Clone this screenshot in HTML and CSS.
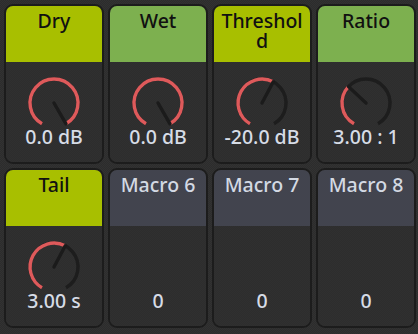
FILE: index.html
```html
<!DOCTYPE html>
<html lang="en">
    <head>
        <meta charset="UTF-8" />
        <meta name="viewport" content="width=device-width, initial-scale=1.0" />
        <title>macros</title>
        <link rel="stylesheet" href="styles.css">
    </head>
    <body>
        <!--매크로 그리드-->
        <main class="rack">
            <!-- 1. Dry -->
            <div class="macro">
                <div class="mhead lime">Dry</div>
                <div class="mbody">
                    <svg class="knob" viewBox="0 0 56 52">
                        <path class="track" d="M16 48.78 A24 24 0 1 1 40 48.78" />
                        <path class="val" d="M16 48.78 A24 24 0 1 1 40 48.78" />
                        <line class="needle" x1="28" y1="28" x2="40" y2="48.78" />
                    </svg>
                    <div class="mval">0.0 dB</div>
                </div>
            </div>
            <!-- 2. Wet -->
            <div class="macro">
                <div class="mhead green">Wet</div>
                <div class="mbody">
                    <svg class="knob" viewBox="0 0 56 52">
                        <path class="track" d="M16 48.78 A24 24 0 1 1 40 48.78" />
                        <path class="val" d="M16 48.78 A24 24 0 1 1 40 48.78" />
                        <line class="needle" x1="28" y1="28" x2="40" y2="48.78" />
                    </svg>
                    <div class="mval">0.0 dB</div>
                </div>
            </div>
            <!-- 3. Threshold -->
            <div class="macro">
                <div class="mhead lime">Threshold</div>
                <div class="mbody">
                    <svg class="knob" viewBox="0 0 56 52">
                        <path class="track" d="M16 48.78 A24 24 0 1 1 40 48.78" />
                        <path class="val" d="M16 48.78 A24 24 0 0 1 39.27 6.81" />
                        <line class="needle" x1="28" y1="28" x2="39.27" y2="6.81" />
                    </svg>
                    <div class="mval">-20.0 dB</div>
                </div>
            </div>
            <!-- 4. Ratio -->
            <div class="macro">
                <div class="mhead green">Ratio</div>
                <div class="mbody">
                    <svg class="knob" viewBox="0 0 56 52">
                        <path class="track" d="M16 48.78 A24 24 0 1 1 40 48.78" />
                        <path class="val" d="M16 48.78 A24 24 0 0 1 10.45 11.63" />
                        <line class="needle" x1="28" y1="28" x2="10.45" y2="11.63" />
                    </svg>
                    <div class="mval">3.00 : 1</div>
                </div>
            </div>
            <!-- 5. Tail -->
            <div class="macro">
                <div class="mhead lime">Tail</div>
                <div class="mbody">
                    <svg class="knob" viewBox="0 0 56 52">
                        <path class="track" d="M16 48.78 A24 24 0 1 1 40 48.78" />
                        <path class="val" d="M16 48.78 A24 24 0 0 1 39.27 6.81" />
                        <line class="needle" x1="28" y1="28" x2="39.27" y2="6.81" />
                    </svg>
                    <div class="mval">3.00 s</div>
                </div>
            </div>
            <!-- 6~8. 빈 매크로 -->
            <div class="macro">
                <div class="mhead grey">Macro 6</div>
                <div class="mbody">
                    <div class="knob"></div>
                    <div class="mval">0</div>
                </div>
            </div>
            <div class="macro">
                <div class="mhead grey">Macro 7</div>
                <div class="mbody">
                    <div class="knob"></div>
                    <div class="mval">0</div>
                </div>
            </div>
            <div class="macro">
                <div class="mhead grey">Macro 8</div>
                <div class="mbody">
                    <div class="knob"></div>
                    <div class="mval">0</div>
                </div>
            </div>
        </main>
    </body>
</html>
```

FILE: styles.css
```css
html,
body {
    margin: 0px;
    padding: 0px;
    width: 100%;
    height: 100%;
}

body {
    /* 바탕 체크무늬 */
    background: repeating-conic-gradient(#2c2c2c 0 25%, #323232 0 50%) 0 0 / 2px 2px;
    font-family: "Noto Sans", "DejaVu Sans", sans-serif;
}

/* 4칸 그리드 */
.rack {
    display: grid;
    grid-template-columns: repeat(4, 100px);
    grid-auto-rows: 160px;
    gap: 4px;
    padding: 4px 0 0 4px;
}

.macro {
    display: flex;
    flex-direction: column;
    border: 2px solid #1c1c1c;
    border-radius: 9px;
    overflow: hidden;
    box-sizing: border-box;
}

/* 제목칸 */
.mhead {
    height: 56px;
    flex-shrink: 0;
    padding: 5px 6px 0;
    box-sizing: border-box;
    font-size: 19.5px;
    font-weight: 500;
    line-height: 20px;
    text-align: center;
    word-break: break-all;
    color: #111;
}

.lime {
    background: #a8bf00;
}

.green {
    background: #7db04f;
}

.grey {
    background: #42444e;
    color: #d3d9e3;
}

/* 노브칸 */
.mbody {
    flex: 1;
    display: flex;
    flex-direction: column;
    align-items: center;
    justify-content: flex-end;
    padding-bottom: 15.5px;
    background: repeating-conic-gradient(#2d2d2d 0 25%, #303030 0 50%) 0 0 / 2px 2px;
}

.knob {
    display: block;
    width: 56px;
    height: 52px;
}

.knob path {
    fill: none;
    stroke-width: 3.4;
    stroke-linecap: butt;
}

.track {
    stroke: #1d1d1d;
}

.val {
    stroke: #de5a5b;
}

.needle {
    stroke: #1b1b1b;
    stroke-width: 3.4;
    stroke-linecap: round;
}

.mval {
    font-size: 19.5px;
    font-weight: 500;
    line-height: 20px;
    color: #d6dce6;
    white-space: nowrap;
}
```
